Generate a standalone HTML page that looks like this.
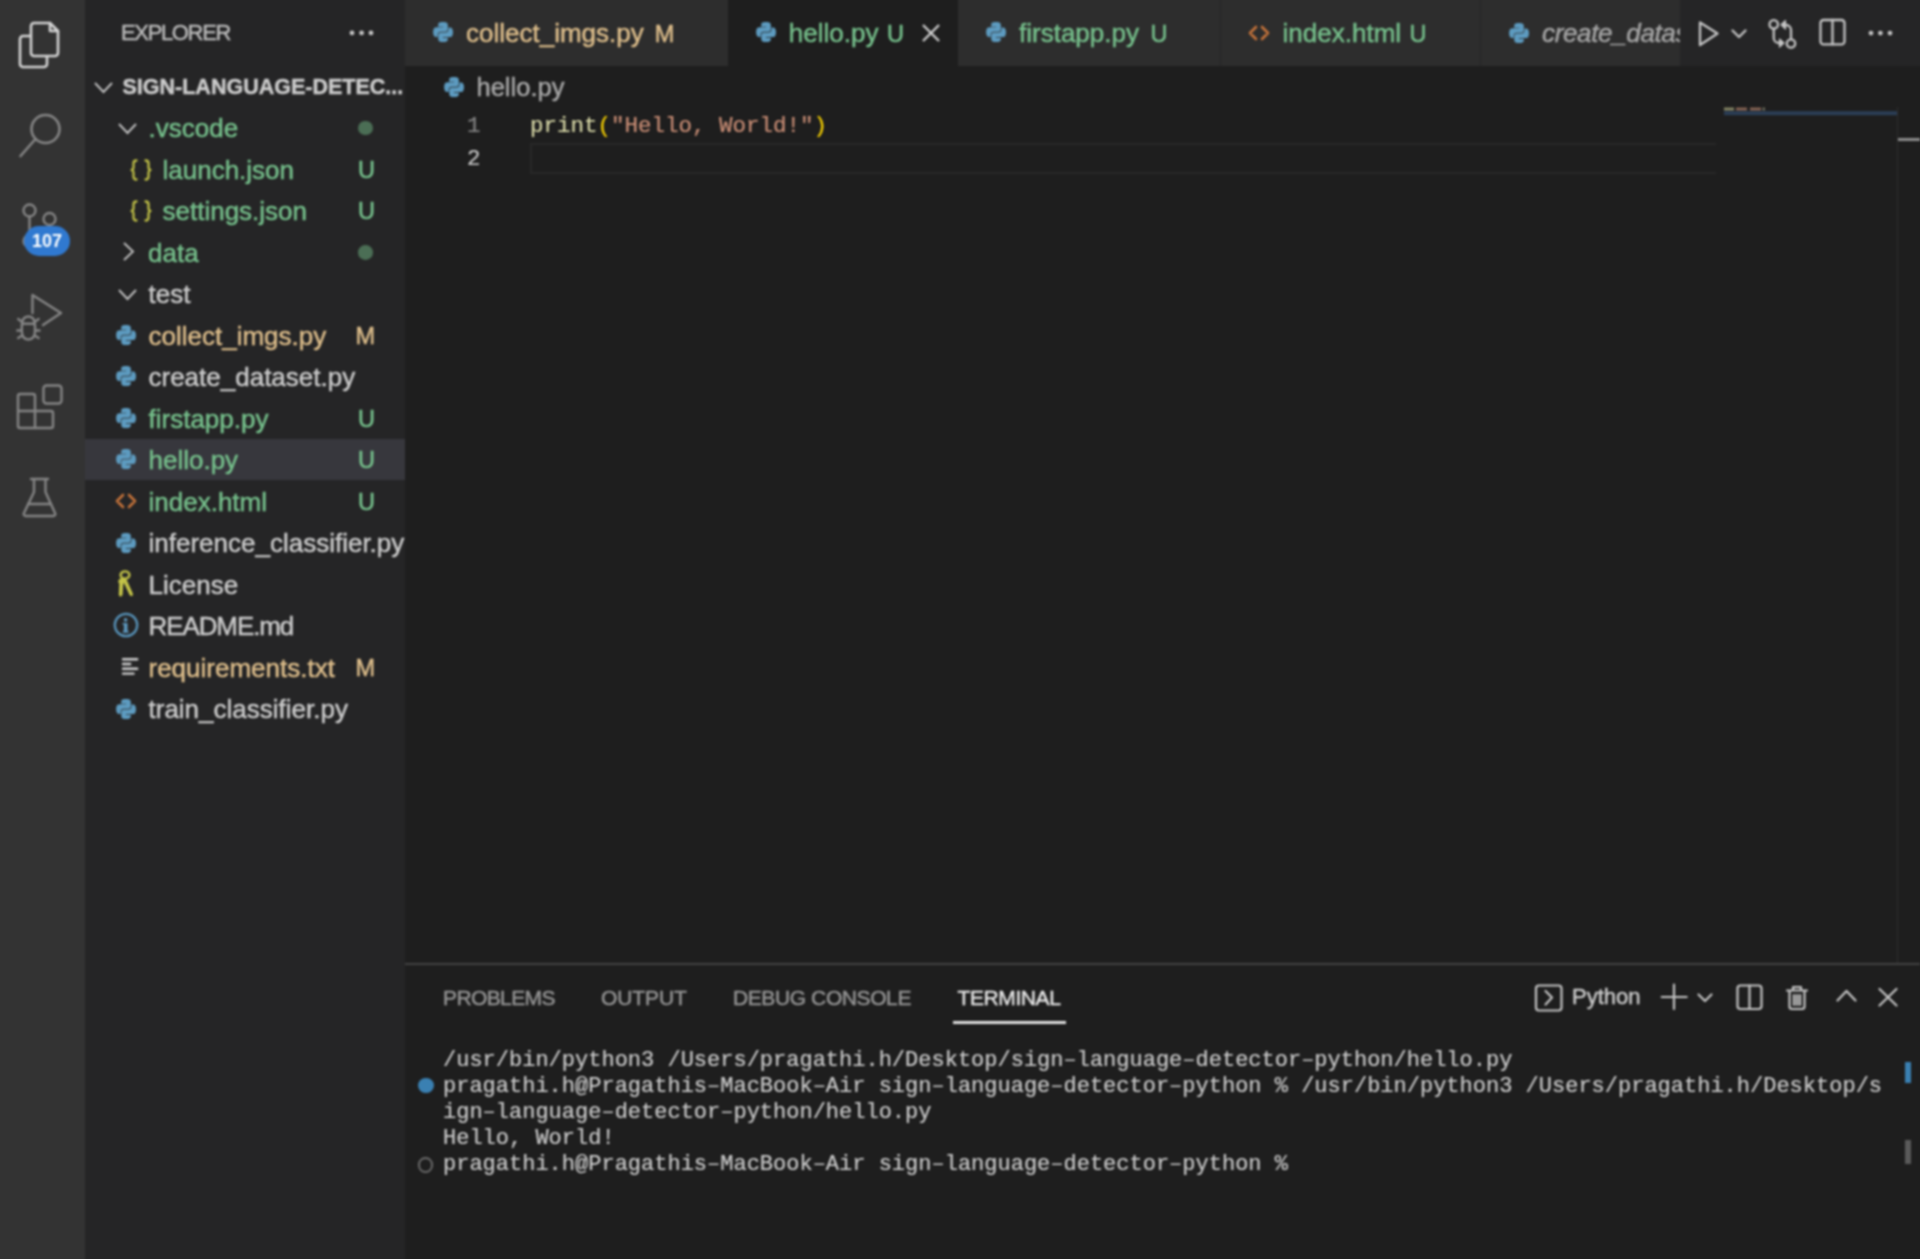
<!DOCTYPE html>
<html><head><meta charset="utf-8">
<style>
*{box-sizing:border-box;margin:0;padding:0}
html,body{width:1920px;height:1259px;overflow:hidden;background:#1e1e1e;}
body{font-family:"Liberation Sans",sans-serif;color:#cccccc;position:relative}
#wrap{position:absolute;left:-20px;top:-20px;width:1960px;height:1299px;filter:blur(1px);overflow:hidden;background:#1e1e1e}
#inner{position:absolute;left:20px;top:20px;width:1920px;height:1259px}
.a{position:absolute}
.t{position:absolute;white-space:nowrap;line-height:40px;height:40px;-webkit-text-stroke:0.45px currentColor}
.m{font-family:"Liberation Mono",monospace;-webkit-text-stroke:0.2px currentColor}
svg{position:absolute;overflow:visible}
#act{left:0;top:0;width:85px;height:1259px;background:#333333}
#side{left:85px;top:0;width:320px;height:1259px;background:#252526;overflow:hidden}
#tabbar{left:405px;top:0;width:1515px;height:66px;background:#252526;overflow:hidden}
.tab{position:absolute;top:0;height:66px;background:#2d2d2d}
.sel{left:0;width:320px;height:41px;background:#37373d}
.g{color:#77c28d}.y{color:#dfbf8c}
</style></head><body>
<div id="clip" style="position:absolute;left:0;top:0;width:1920px;height:1259px;overflow:hidden">
<div id="wrap">
<div class="a" style="left:0;top:0;width:105px;height:1299px;background:#333333"></div>
<div class="a" style="left:105px;top:0;width:320px;height:1299px;background:#252526"></div>
<div class="a" style="left:425px;top:0;width:1535px;height:86px;background:#252526"></div>
<div class="a" style="left:425px;top:0;width:323px;height:20px;background:#2d2d2d"></div>
<div class="a" style="left:748px;top:0;width:230px;height:20px;background:#1e1e1e"></div>
<div class="a" style="left:978px;top:0;width:262px;height:20px;background:#2d2d2d"></div>
<div class="a" style="left:1241px;top:0;width:259px;height:20px;background:#2d2d2d"></div>
<div class="a" style="left:1501px;top:0;width:199px;height:20px;background:#2d2d2d"></div>
<div id="inner">
<svg width="0" height="0" style="position:absolute;left:0;top:0">
<defs>
 <symbol id="py" viewBox="0 0 110 110">
  <g fill="#5d9bc0" fill-rule="evenodd">
  <path d="M54.9 0.5c-4.6 0-9 .4-12.8 1.1C30.8 3.6 28.8 7.7 28.8 15.4v10.2h26.4v3.4H18.9c-7.7 0-14.4 4.6-16.5 13.3-2.4 10-2.5 16.2 0 26.6 1.9 7.8 6.3 13.3 14 13.3h9.1V70c0-8.7 7.5-16.4 16.5-16.4h26.3c7.3 0 13.2-6 13.2-13.3V15.4c0-7.1-6-12.5-13.2-13.7C63.9.8 59.4.5 54.9.5z"/>
  <path d="M85.1 29v11.9c0 9.2-7.8 17-16.7 17H42.1c-7.2 0-13.2 6.2-13.2 13.4v25.1c0 7.1 6.2 11.3 13.2 13.4 8.3 2.4 16.3 2.9 26.3 0 6.6-1.9 13.2-5.8 13.2-13.4V86.5H55.3v-3.4h39.5c7.7 0 10.5-5.3 13.2-13.3 2.8-8.2 2.6-16.1 0-26.6-1.9-7.6-5.5-13.3-13.2-13.3H85.1z"/>
  </g>
 </symbol>
 <symbol id="json" viewBox="0 0 22 22">
  <g fill="none" stroke="#bfbf46" stroke-width="2.3" stroke-linecap="round" stroke-linejoin="round">
   <path d="M6.5 1.5 Q3.5 1.5 3.5 4.5 V8 Q3.5 10.5 1.5 11 Q3.5 11.5 3.5 14 V17.5 Q3.5 20.5 6.5 20.5"/>
   <path d="M15.5 1.5 Q18.5 1.5 18.5 4.5 V8 Q18.5 10.5 20.5 11 Q18.5 11.5 18.5 14 V17.5 Q18.5 20.5 15.5 20.5"/>
  </g>
 </symbol>
 <symbol id="html" viewBox="0 0 22 20">
  <g fill="none" stroke="#c4733a" stroke-width="2.6" stroke-linecap="round" stroke-linejoin="round">
   <path d="M8 4 L2 10 L8 16 M14 4 L20 10 L14 16"/>
  </g>
 </symbol>
 <symbol id="key" viewBox="0 0 20 28">
  <g fill="none" stroke="#c4c448" stroke-width="2.4" stroke-linecap="round" stroke-linejoin="round">
   <ellipse cx="10" cy="5" rx="4.4" ry="3.6"/>
  </g>
  <g fill="#c4c448">
   <path d="M5.5 8.5 Q9.5 7.5 10.2 10.5 Q10 13 8.2 14 L7.6 24.5 Q7.4 26.5 5.6 26.5 Q3.8 26.5 3.8 24.5 L4.3 13.8 Q2.8 12.5 3.4 10.5 Q4 8.8 5.5 8.5 Z"/>
   <path d="M9.6 9 Q11.8 8.6 12.2 11 L17.8 23.5 Q18.6 25.5 16.9 26 Q15.3 26.5 14.5 24.8 L9.2 13.5 Z"/>
  </g>
 </symbol>
 <symbol id="info" viewBox="0 0 26 26">
  <circle cx="13" cy="13" r="11.2" fill="none" stroke="#5792b8" stroke-width="2.3"/>
  <g fill="#5d98be"><circle cx="12.6" cy="7.9" r="1.8"/><rect x="10.9" y="11" width="3.6" height="9.5" rx="0.6"/><rect x="9.6" y="11" width="3" height="1.6"/><rect x="9.8" y="18.8" width="5.8" height="1.8"/></g>
 </symbol>
 <symbol id="txt" viewBox="0 0 20 20">
  <g stroke="#cfcfcf" stroke-width="2.4" stroke-linecap="round">
   <path d="M2 2.3 H16.2 M2 7 H9.2 M2 11.8 H16.2 M2 16.6 H12.6"/>
  </g>
 </symbol>
</defs>
</svg>


<!-- ACTIVITY BAR -->
<div id="act" class="a">
<svg width="85" height="600" style="left:0;top:0" fill="none" stroke-linejoin="round" stroke-linecap="round">
 <!-- explorer -->
 <g stroke="#d4d4d4" stroke-width="2.6">
  <path d="M30 36 H23 a3 3 0 0 0 -3 3 V64 a3 3 0 0 0 3 3 H44 a3 3 0 0 0 3 -3 V57"/>
  <path d="M34 23 H50 L58 31 V53 a3 3 0 0 1 -3 3 H34 a3 3 0 0 1 -3 -3 V26 a3 3 0 0 1 3 -3 Z"/>
  <path d="M50 23 V31 H58"/>
 </g>
 <!-- search -->
 <g stroke="#858585" stroke-width="2.6">
  <circle cx="45.5" cy="129" r="14"/>
  <path d="M35.5 139 L20.5 156"/>
 </g>
 <!-- scm -->
 <g stroke="#858585" stroke-width="2.4">
  <circle cx="29.5" cy="210.5" r="6"/>
  <circle cx="49.5" cy="219" r="6"/>
  <path d="M29.5 216.5 V235"/>
  <circle cx="29.5" cy="241" r="6"/>
 </g>
 <!-- run & debug -->
 <g stroke="#858585" stroke-width="2.4">
  <path d="M32.5 313 V295 L61 313 L43 325"/>
  <path d="M21.8 326 Q21.8 316.5 28.4 316.5 Q35 316.5 35 326 V331 Q35 339.5 28.4 339.5 Q21.8 339.5 21.8 331 Z"/>
  <path d="M22 323.8 H34.8"/>
  <path d="M18.2 319 L21.5 321.5 M38.6 319 L35.3 321.5 M17.3 330.5 H21.8 M35 330.5 H39.5 M18.2 338 L22 335.5 M38.6 338 L34.8 335.5"/>
 </g>
 <!-- extensions -->
 <g stroke="#858585" stroke-width="2.4">
  <path d="M20 394 H33 a2 2 0 0 1 2 2 V411 H51 a2 2 0 0 1 2 2 V426 a2 2 0 0 1 -2 2 H20 a2 2 0 0 1 -2 -2 V396 a2 2 0 0 1 2 -2 Z"/>
  <path d="M35 411 V428 M18 411 H35"/>
  <rect x="43.5" y="385.5" width="18" height="18" rx="3"/>
 </g>
 <!-- testing -->
 <g stroke="#858585" stroke-width="2.4">
  <path d="M31 479 H48 M34 479 V492 L24 513 a2 2 0 0 0 2 3 H53 a2 2 0 0 0 2 -3 L45.5 492 V479"/>
  <path d="M28 504 H51"/>
 </g>
</svg>
<div class="a" style="left:24px;top:226px;width:46px;height:30px;border-radius:15px;background:#3079d0;color:#fff;font-weight:bold;font-size:18px;line-height:30px;text-align:center">107</div>
</div>

<!-- SIDEBAR -->
<div id="side" class="a">
<div class="t" style="left:36px;top:13.3px;font-size:22px;color:#bbbbbb;letter-spacing:-1.35px">EXPLORER</div>
<svg width="30" height="10" style="left:264px;top:28px" fill="#c5c5c5"><circle cx="3" cy="4.9" r="2.4"/><circle cx="12.6" cy="4.9" r="2.4"/><circle cx="22" cy="4.9" r="2.4"/></svg>
<div class="t" style="left:37.5px;top:66.7px;height:41.5px;line-height:41.5px;font-size:21.5px;font-weight:bold;color:#cccccc">SIGN-LANGUAGE-DETEC...</div>
<svg width="20" height="12" style="left:9px;top:81.5px" fill="none" stroke="#c0c0c0" stroke-width="1.9"><path d="M1 1 L9.5 10 L18 1"/></svg>
<div class="t g" style="left:63.5px;top:108.2px;height:41.5px;line-height:41.5px;font-size:26px">.vscode</div>
<svg width="20" height="12" style="left:33px;top:123.0px" fill="none" stroke="#c0c0c0" stroke-width="1.9"><path d="M1 1 L9.5 10 L18 1"/></svg>
<div class="a" style="left:273px;top:120.7px;width:14.6px;height:14.6px;border-radius:50%;background:#4b6e55"></div>
<div class="t g" style="left:77.5px;top:149.7px;height:41.5px;line-height:41.5px;font-size:26px">launch.json</div>
<svg width="22" height="22" style="left:45px;top:158.9px"><use href="#json"/></svg>
<div class="t g" style="left:215px;width:75px;text-align:right;top:149.7px;height:41.5px;line-height:41.5px;font-size:23.5px">U</div>
<div class="t g" style="left:77.5px;top:191.2px;height:41.5px;line-height:41.5px;font-size:26px">settings.json</div>
<svg width="22" height="22" style="left:45px;top:200.4px"><use href="#json"/></svg>
<div class="t g" style="left:215px;width:75px;text-align:right;top:191.2px;height:41.5px;line-height:41.5px;font-size:23.5px">U</div>
<div class="t g" style="left:63px;top:232.7px;height:41.5px;line-height:41.5px;font-size:26px">data</div>
<svg width="12" height="20" style="left:38px;top:242.4px" fill="none" stroke="#c0c0c0" stroke-width="1.9"><path d="M1 1 L10 9.5 L1 18"/></svg>
<div class="a" style="left:273px;top:245.1px;width:14.6px;height:14.6px;border-radius:50%;background:#4b6e55"></div>
<div class="t" style="left:63.5px;top:274.2px;height:41.5px;line-height:41.5px;font-size:26px">test</div>
<svg width="20" height="12" style="left:33px;top:288.9px" fill="none" stroke="#c0c0c0" stroke-width="1.9"><path d="M1 1 L9.5 10 L18 1"/></svg>
<div class="t y" style="left:63.5px;top:315.7px;height:41.5px;line-height:41.5px;font-size:26px">collect_imgs.py</div>
<svg width="20" height="20" style="left:30.8px;top:324.9px"><use href="#py"/></svg>
<div class="t y" style="left:215px;width:75px;text-align:right;top:315.7px;height:41.5px;line-height:41.5px;font-size:23.5px">M</div>
<div class="t" style="left:63.5px;top:357.2px;height:41.5px;line-height:41.5px;font-size:26px">create_dataset.py</div>
<svg width="20" height="20" style="left:30.8px;top:366.4px"><use href="#py"/></svg>
<div class="t g" style="left:63.5px;top:398.7px;height:41.5px;line-height:41.5px;font-size:26px">firstapp.py</div>
<svg width="20" height="20" style="left:30.8px;top:407.9px"><use href="#py"/></svg>
<div class="t g" style="left:215px;width:75px;text-align:right;top:398.7px;height:41.5px;line-height:41.5px;font-size:23.5px">U</div>
<div class="a sel" style="top:439.2px"></div>
<div class="t g" style="left:63.5px;top:440.2px;height:41.5px;line-height:41.5px;font-size:26px">hello.py</div>
<svg width="20" height="20" style="left:30.8px;top:449.4px"><use href="#py"/></svg>
<div class="t g" style="left:215px;width:75px;text-align:right;top:440.2px;height:41.5px;line-height:41.5px;font-size:23.5px">U</div>
<div class="t g" style="left:63.5px;top:481.7px;height:41.5px;line-height:41.5px;font-size:26px">index.html</div>
<svg width="22" height="20" style="left:30px;top:491.4px"><use href="#html"/></svg>
<div class="t g" style="left:215px;width:75px;text-align:right;top:481.7px;height:41.5px;line-height:41.5px;font-size:23.5px">U</div>
<div class="t" style="left:63.5px;top:523.2px;height:41.5px;line-height:41.5px;font-size:26px">inference_classifier.py</div>
<svg width="20" height="20" style="left:30.8px;top:532.5px"><use href="#py"/></svg>
<div class="t" style="left:63.5px;top:564.7px;height:41.5px;line-height:41.5px;font-size:26px">License</div>
<svg width="20" height="28" style="left:30px;top:569.5px"><use href="#key"/></svg>
<div class="t" style="left:63.5px;top:606.2px;height:41.5px;line-height:41.5px;font-size:26px;letter-spacing:-1.1px">README.md</div>
<svg width="26" height="26" style="left:27.8px;top:612.2px"><use href="#info"/></svg>
<div class="t y" style="left:63.5px;top:647.7px;height:41.5px;line-height:41.5px;font-size:26px">requirements.txt</div>
<svg width="20" height="20" style="left:35.7px;top:657px"><use href="#txt"/></svg>
<div class="t y" style="left:215px;width:75px;text-align:right;top:647.7px;height:41.5px;line-height:41.5px;font-size:23.5px">M</div>
<div class="t" style="left:63.5px;top:689.2px;height:41.5px;line-height:41.5px;font-size:26px">train_classifier.py</div>
<svg width="20" height="20" style="left:30.8px;top:698.5px"><use href="#py"/></svg>
</div>

<!-- TAB BAR -->
<div id="tabbar" class="a">
<div class="tab" style="left:0;width:323px"></div>
<div class="tab" style="left:323px;width:230px;background:#1e1e1e"></div>
<div class="tab" style="left:553px;width:262px"></div>
<div class="tab" style="left:816px;width:259px"></div>
<div class="tab" style="left:1076px;width:260px"></div>
<svg width="20" height="20" style="left:27.5px;top:22px"><use href="#py"/></svg>
<div class="t y" style="left:61px;top:13px;font-size:26px">collect_imgs.py</div>
<div class="t y" style="left:249.8px;top:13.5px;font-size:23.5px">M</div>
<svg width="20" height="20" style="left:351px;top:22px"><use href="#py"/></svg>
<div class="t g" style="left:383.8px;top:13px;font-size:26px">hello.py</div>
<div class="t g" style="left:482px;top:13.5px;font-size:23.5px">U</div>
<svg width="18" height="18" style="left:517px;top:24px" fill="none" stroke="#d0d0d0" stroke-width="2.3"><path d="M1 1 L17 17 M17 1 L1 17"/></svg>
<svg width="20" height="20" style="left:581px;top:22px"><use href="#py"/></svg>
<div class="t g" style="left:614px;top:13px;font-size:26px">firstapp.py</div>
<div class="t g" style="left:745.5px;top:13.5px;font-size:23.5px">U</div>
<svg width="22" height="20" style="left:843px;top:23px"><use href="#html"/></svg>
<div class="t g" style="left:877.6px;top:13px;font-size:26px">index.html</div>
<div class="t g" style="left:1004.5px;top:13.5px;font-size:23.5px">U</div>
<svg width="20" height="20" style="left:1103.7px;top:23px"><use href="#py"/></svg>
<div class="t" style="left:1137px;top:13px;font-size:26px;font-style:italic;color:#a6a6a6;letter-spacing:-0.35px">create_dataset.py</div>
<div class="a" style="left:1275px;top:0;width:240px;height:66px;background:#252526"></div>
<svg width="240" height="66" style="left:1270px;top:0" fill="none" stroke="#c5c5c5" stroke-width="2.3" stroke-linejoin="round" stroke-linecap="round">
 <path d="M25 22.5 L42.5 33.5 L25 45 Z"/>
 <path d="M57.5 30.5 L64 37 L70.5 30.5"/>
 <circle cx="98.75" cy="24.4" r="4.2"/>
 <circle cx="116" cy="43.5" r="4.2"/>
 <path d="M98.75 28.6 V38 a5 5 0 0 0 5 5 H105"/>
 <path d="M104.5 39 L109 43 L104.5 47 Z" fill="#c5c5c5" stroke-width="1.2"/>
 <path d="M116 39.3 V30 a5 5 0 0 0 -5 -5 H109.5"/>
 <path d="M110.5 20.5 L106 24.8 L110.5 29 Z" fill="#c5c5c5" stroke-width="1.2"/>
 <rect x="145.5" y="20" width="24" height="24.4" rx="3"/>
 <path d="M157.5 20 V44.4"/>
</svg>
<svg width="240" height="66" style="left:1270px;top:0" fill="#c5c5c5">
 <circle cx="196" cy="33.1" r="2.4"/><circle cx="205.4" cy="33.1" r="2.4"/><circle cx="215" cy="33.1" r="2.4"/>
</svg>

</div>
<div id="editor">
<!-- breadcrumbs -->
<svg width="20" height="20" style="left:444px;top:76.5px"><use href="#py"/></svg>
<div class="t" style="left:476.5px;top:67px;font-size:25.5px;color:#a9a9a9">hello.py</div>
<!-- line numbers -->
<div class="t m" style="left:438.5px;width:42px;text-align:right;top:108.5px;height:34px;line-height:34px;font-size:22.5px;color:#858585">1</div>
<div class="t m" style="left:438.5px;width:42px;text-align:right;top:142px;height:34px;line-height:34px;font-size:22.5px;color:#c6c6c6">2</div>
<div class="t m" style="left:530px;top:108.5px;height:34px;line-height:34px;font-size:22.5px"><span style="color:#dcdcaa">print</span><span style="color:#ffd700">(</span><span style="color:#ce9178">"Hello, World!"</span><span style="color:#ffd700">)</span></div>
<div class="a" style="left:530px;top:142.5px;width:1186px;height:31px;border:2px solid #282828;border-right:none"></div>
<!-- minimap -->
<svg width="180" height="10" style="left:1723px;top:106px">
 <rect x="1" y="1.6" width="10" height="2.8" fill="#8a8a68"/><rect x="13" y="1.6" width="11" height="2.8" fill="#8a6656"/><rect x="27" y="1.6" width="11" height="2.8" fill="#8a6656"/><rect x="39.5" y="1.6" width="2.5" height="2.8" fill="#707060"/>
 <rect x="1" y="5.2" width="174" height="4" fill="#2b3e56"/>
</svg>
<div class="a" style="left:1897px;top:107px;width:1px;height:857px;background:#2e2e2e"></div>
<div class="a" style="left:1898px;top:137.5px;width:22px;height:3.5px;background:#8c8c8c"></div>

</div>
<div id="panel">
<div class="a" style="left:405px;top:963px;width:1515px;height:2px;background:#424242"></div>
<div class="t" style="left:443px;top:978px;font-size:21px;color:#969696;letter-spacing:-0.6px">PROBLEMS</div>
<div class="t" style="left:601px;top:978px;font-size:21px;color:#969696;letter-spacing:-0.1px">OUTPUT</div>
<div class="t" style="left:733px;top:978px;font-size:21px;color:#969696;letter-spacing:-0.4px">DEBUG CONSOLE</div>
<div class="t" style="left:957.5px;top:978px;font-size:21px;color:#e7e7e7;letter-spacing:-0.4px">TERMINAL</div>
<div class="a" style="left:952.5px;top:1021px;width:113px;height:2.5px;background:#e0e0e0"></div>
<svg width="400" height="60" style="left:1520px;top:970px" fill="none" stroke="#c5c5c5" stroke-width="2.2" stroke-linejoin="round" stroke-linecap="round">
 <rect x="16" y="15.5" width="25.5" height="25" rx="3"/>
 <path d="M25.5 21 L32 27.5 L25.5 34.5"/>
 <path d="M154 14.5 V39 M141.7 27 H166.7"/>
 <path d="M178.5 24.5 L185 31 L191.5 24.5"/>
 <rect x="217.5" y="15.5" width="24" height="23.5" rx="3"/>
 <path d="M229.5 15.5 V39"/>
 <path d="M267 20.5 H287 M273 20.5 V17 H281 V20.5 M269.5 21 V36.5 a2.5 2.5 0 0 0 2.5 2.5 H282 a2.5 2.5 0 0 0 2.5 -2.5 V21 M274 25 V35 M277 25 V35 M280 25 V35"/>
 <path d="M317.5 30.5 L326.5 21 L335.5 30.5"/>
 <path d="M359.5 19 L376.5 35.5 M376.5 19 L359.5 35.5"/>
</svg>
<div class="t" style="left:1572px;top:977px;font-size:22px;color:#cccccc">Python</div>
<!-- terminal -->
<div class="a m" style="left:443px;top:1048px;font-size:22px;line-height:26px;color:#cccccc;white-space:pre">/usr/bin/python3 /Users/pragathi.h/Desktop/sign–language–detector–python/hello.py
pragathi.h@Pragathis–MacBook–Air sign–language–detector–python % /usr/bin/python3 /Users/pragathi.h/Desktop/s
ign–language–detector–python/hello.py
Hello, World!
pragathi.h@Pragathis–MacBook–Air sign–language–detector–python % </div>
<div class="a" style="left:418px;top:1077.8px;width:15.6px;height:15.6px;border-radius:50%;background:#3a80b2"></div>
<div class="a" style="left:418px;top:1157.4px;width:15.2px;height:15.2px;border-radius:50%;border:2px solid #6a6a6a"></div>
<div class="a" style="left:1905.2px;top:1061.5px;width:5.8px;height:21.5px;background:#3a80b2"></div>
<div class="a" style="left:1905.2px;top:1140px;width:5.8px;height:23.5px;background:#5a5a5a"></div>

</div>

</div>
</div>
</div>
</body></html>
